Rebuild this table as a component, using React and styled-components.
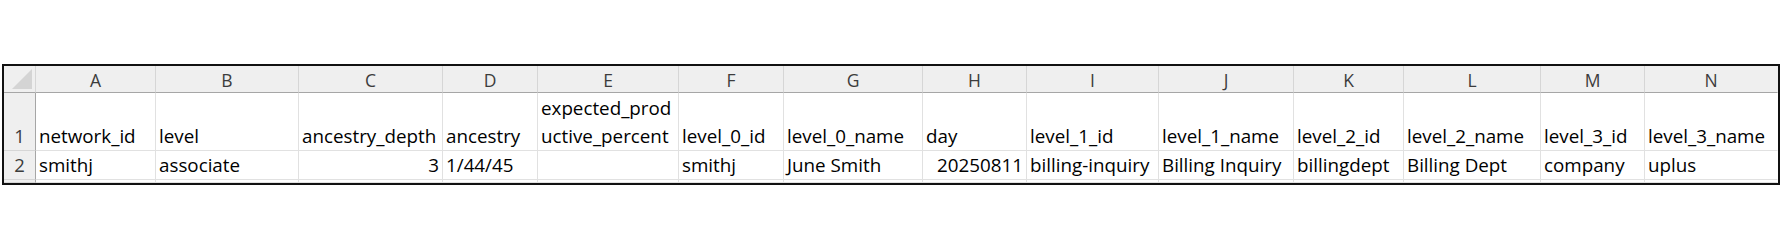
import React from "react";
import styled, { createGlobalStyle } from "styled-components";

const GlobalStyle = createGlobalStyle`
  body {
    margin: 0;
    background: #ffffff;
    font-family: "Open Sans", "Noto Sans", Arial, sans-serif;
  }
`;

const columns = [
  { letter: "A", width: 120 },
  { letter: "B", width: 143 },
  { letter: "C", width: 144 },
  { letter: "D", width: 95 },
  { letter: "E", width: 141 },
  { letter: "F", width: 105 },
  { letter: "G", width: 139 },
  { letter: "H", width: 104 },
  { letter: "I", width: 132 },
  { letter: "J", width: 135 },
  { letter: "K", width: 110 },
  { letter: "L", width: 137 },
  { letter: "M", width: 104 },
  { letter: "N", width: 133 }
];

const headerRow = [
  "network_id",
  "level",
  "ancestry_depth",
  "ancestry",
  ["expected_prod", "uctive_percent"],
  "level_0_id",
  "level_0_name",
  "day",
  "level_1_id",
  "level_1_name",
  "level_2_id",
  "level_2_name",
  "level_3_id",
  "level_3_name"
];

const dataRow = [
  "smithj",
  "associate",
  { value: "3", number: true },
  "1/44/45",
  "",
  "smithj",
  "June Smith",
  { value: "20250811", number: true },
  "billing-inquiry",
  "Billing Inquiry",
  "billingdept",
  "Billing Dept",
  "company",
  "uplus"
];

const Page = styled.div`
  padding: 64px 0 0 2px;
`;

const Sheet = styled.div`
  display: grid;
  grid-template-columns: 32px ${columns.map(c => `${c.width}px`).join(" ")};
  grid-template-rows: 27px 58px 29px 3px;
  width: fit-content;
  border: 2px solid #111111;
  overflow: hidden;
`;

const Corner = styled.div`
  background: #efefef;
  border-right: 1px solid #d6d6d6;
  border-bottom: 1px solid #a6a6a6;
  display: flex;
  justify-content: flex-end;
  align-items: flex-end;
  padding: 0 3px 3px 0;
`;

const Triangle = styled.div`
  width: 20px;
  height: 20px;
  background: #d4d4d4;
  clip-path: polygon(100% 0, 100% 100%, 0 100%);
`;

const ColHeader = styled.div`
  background: #efefef;
  border-right: 1px solid ${p => (p.last ? "transparent" : "#d6d6d6")};
  border-bottom: 1px solid #a6a6a6;
  color: #3c3c3c;
  font-size: 17.5px;
  line-height: 26px;
  padding-top: 1px;
  text-align: center;
`;

const RowHeader = styled.div`
  background: #efefef;
  border-right: 1px solid #a6a6a6;
  border-bottom: 1px solid #d6d6d6;
  color: #3c3c3c;
  font-size: 18.5px;
  line-height: 28px;
  display: flex;
  flex-direction: column;
  justify-content: flex-end;
  align-items: center;
`;

const Cell = styled.div`
  border-right: 1px solid ${p => (p.last ? "transparent" : "#e1e1e1")};
  border-bottom: 1px solid #e1e1e1;
  color: #000000;
  font-size: 18.8px;
  line-height: 28px;
  padding: 0 3px 0 3px;
  display: flex;
  flex-direction: column;
  justify-content: flex-end;
  align-items: ${p => (p.number ? "flex-end" : "flex-start")};
  white-space: nowrap;
  overflow: hidden;
`;

const Line = styled.span`
  display: block;
`;

const App = () => {
  const lastIndex = columns.length - 1;
  return (
    <>
      <GlobalStyle />
      <Page>
        <Sheet>
          <Corner>
            <Triangle />
          </Corner>
          {columns.map((c, i) => (
            <ColHeader key={c.letter} last={i === lastIndex}>
              {c.letter}
            </ColHeader>
          ))}

          <RowHeader>1</RowHeader>
          {headerRow.map((h, i) => (
            <Cell key={"h" + i} last={i === lastIndex}>
              {Array.isArray(h) ? h.map(part => <Line key={part}>{part}</Line>) : h}
            </Cell>
          ))}

          <RowHeader>2</RowHeader>
          {dataRow.map((d, i) => {
            const isObj = typeof d === "object";
            return (
              <Cell key={"d" + i} last={i === lastIndex} number={isObj && d.number}>
                {isObj ? d.value : d}
              </Cell>
            );
          })}

          <RowHeader />
          {columns.map((c, i) => (
            <Cell key={"e" + c.letter} last={i === lastIndex} />
          ))}
        </Sheet>
      </Page>
    </>
  );
};

export default App;
